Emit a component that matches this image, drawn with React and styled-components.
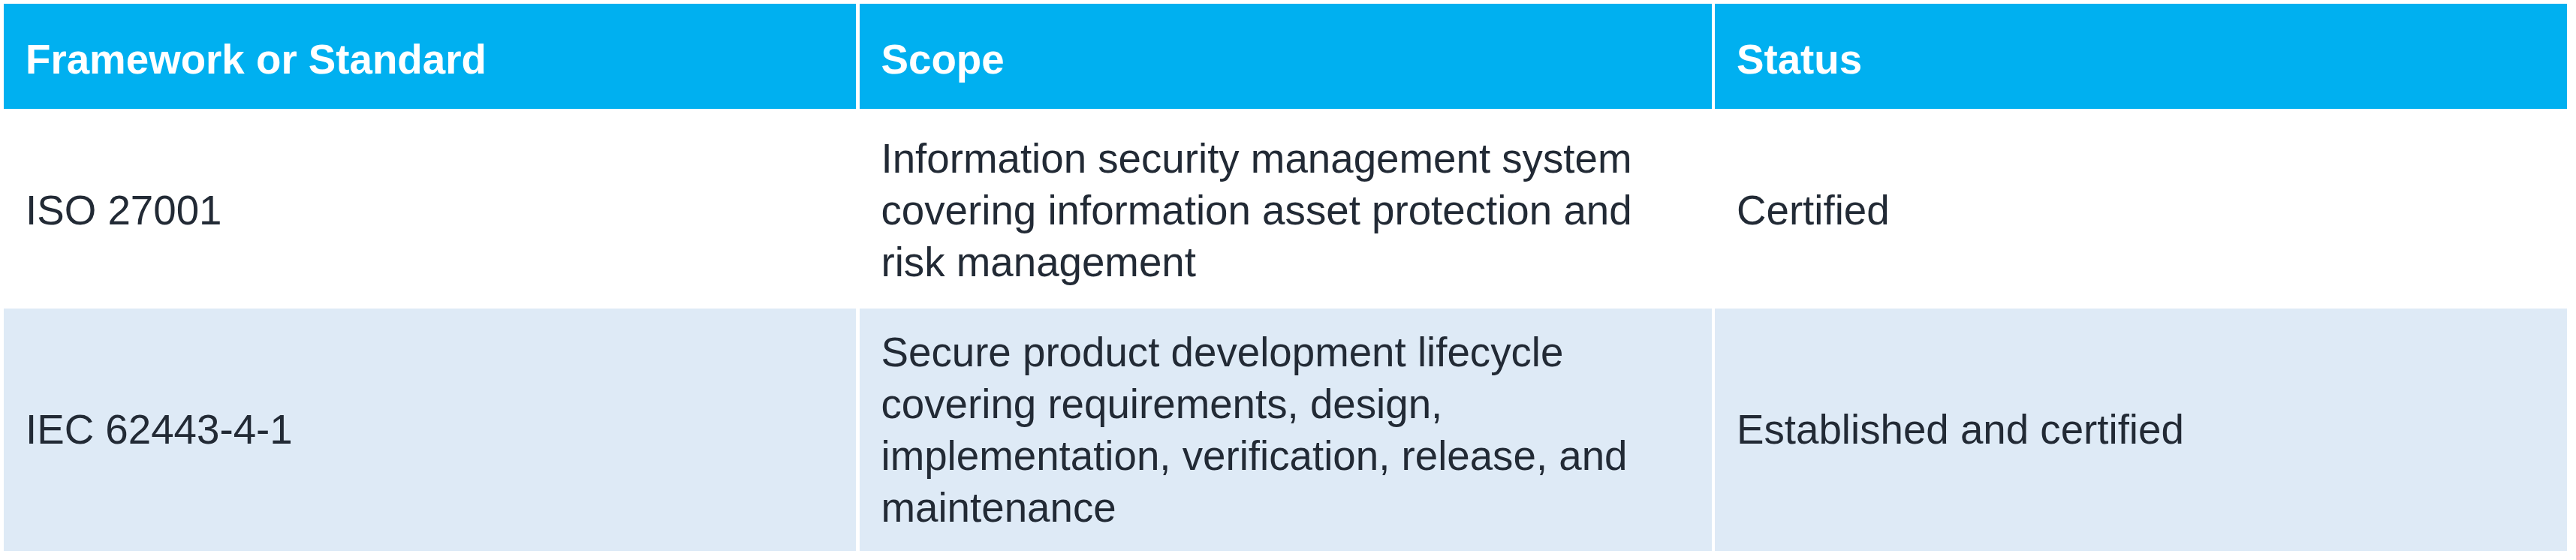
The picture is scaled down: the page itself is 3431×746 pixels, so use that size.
import React from 'react';
import styled, { createGlobalStyle } from 'styled-components';

const GlobalStyle = createGlobalStyle`
  html, body {
    margin: 0;
    padding: 0;
    background: #fff;
  }
  body {
    font-family: "Liberation Sans", Arial, sans-serif;
  }
`;

const Page = styled.div`
  padding: 5px 12px 12px 5px;
`;

const Table = styled.div`
  width: 3414px;
  display: grid;
  grid-template-columns: repeat(3, 1fr);
  grid-template-rows: 140px 258px 323px;
  column-gap: 4.5px;
  row-gap: 4px;
`;

const HeadCell = styled.div`
  display: flex;
  align-items: center;
  background: #00b0f0;
  color: #fff;
  font-weight: bold;
  font-size: 54.7px;
  line-height: 70px;
  padding: 8px 29px 0;
`;

const Cell = styled.div`
  display: flex;
  align-items: center;
  background: ${({ $shaded }) => ($shaded ? '#deeaf6' : '#fff')};
  color: #222a35;
  font-size: 54.7px;
  line-height: 69px;
  padding: ${({ $shaded }) => ($shaded ? '0 29px' : '4px 29px 0')};
`;

const columns = ['Framework or Standard', 'Scope', 'Status'];

const rows = [
  {
    id: 'iso',
    name: 'ISO 27001',
    scope: 'Information security management system covering information asset protection and risk management',
    status: 'Certified',
  },
  {
    id: 'iec',
    name: 'IEC 62443-4-1',
    scope: 'Secure product development lifecycle covering requirements, design, implementation, verification, release, and maintenance',
    status: 'Established and certified',
  },
];

const App = () => {
  return (
    <Page>
      <GlobalStyle />
      <Table>
        {columns.map((col) => (
          <HeadCell key={col}>{col}</HeadCell>
        ))}
        {rows.map((row, i) => (
          <React.Fragment key={row.id}>
            <Cell $shaded={i % 2 === 1}>{row.name}</Cell>
            <Cell $shaded={i % 2 === 1}>{row.scope}</Cell>
            <Cell $shaded={i % 2 === 1}>{row.status}</Cell>
          </React.Fragment>
        ))}
      </Table>
    </Page>
  );
};

export default App;
